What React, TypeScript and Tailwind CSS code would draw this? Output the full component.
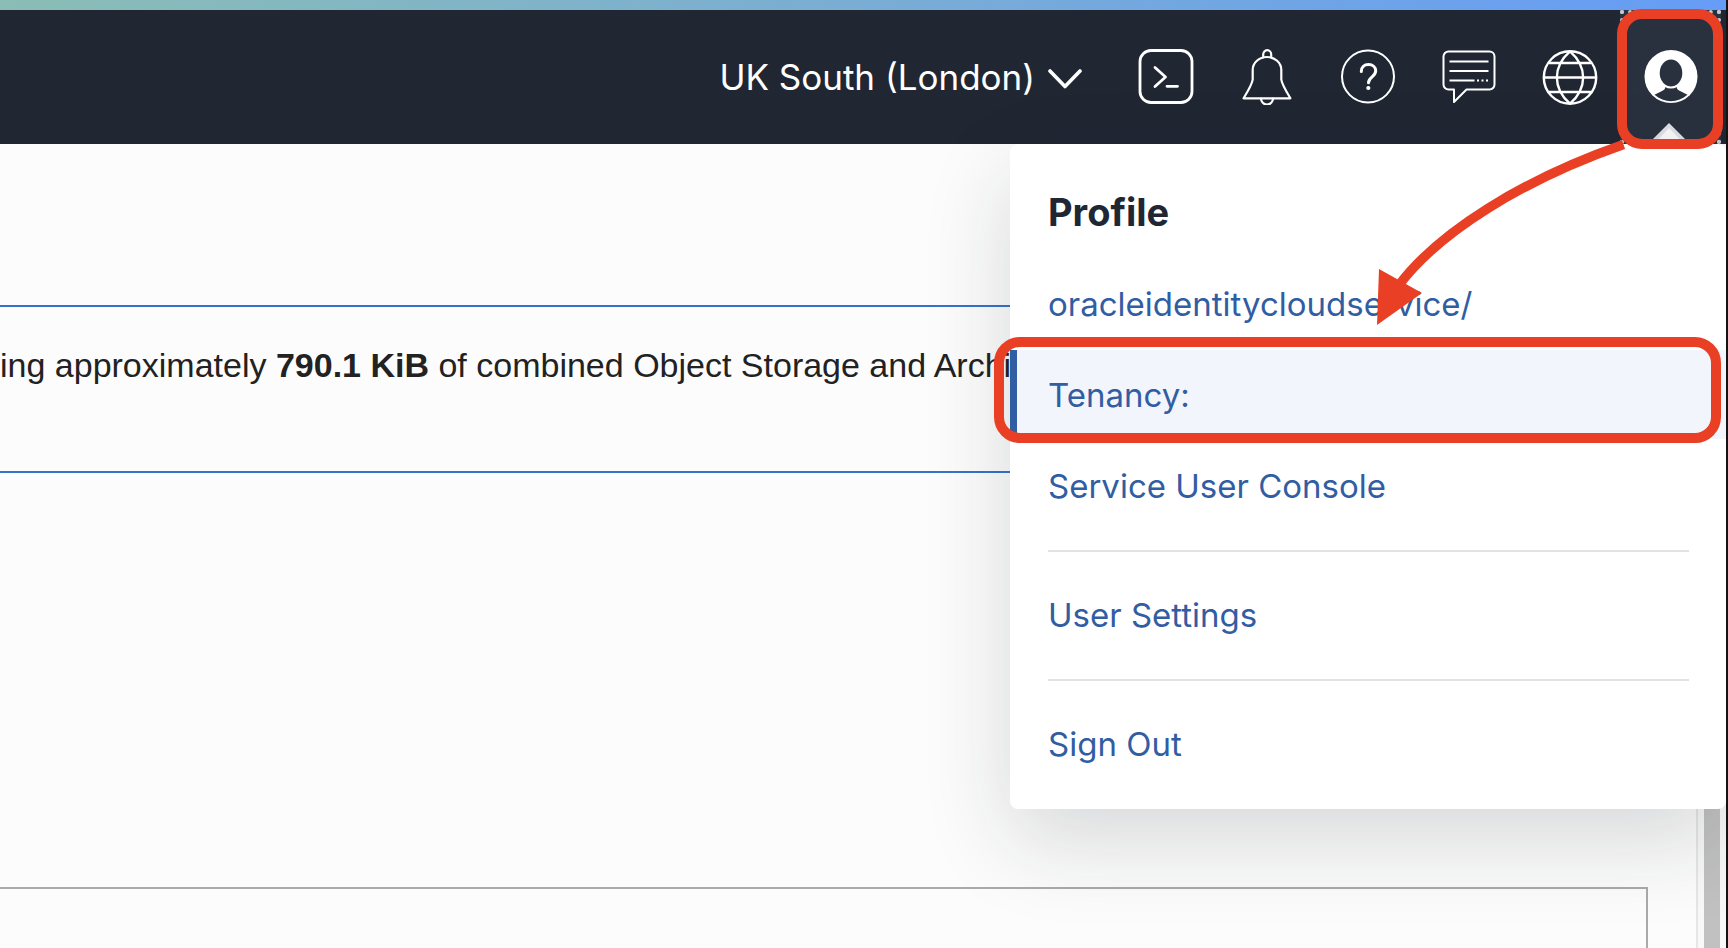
import type { ReactNode } from "react";

const iconBox = "h-[56px] w-[56px] shrink-0";

function TerminalIcon() {
  return (
    <svg className={iconBox} viewBox="0 0 56 56" fill="none" stroke="#fff" strokeWidth="2.8" strokeLinecap="round" strokeLinejoin="round">
      <rect x="2" y="1.5" width="52" height="52" rx="11" />
      <path d="M17 18.5 27.5 28 17 37.5M29 37.3h10.5" />
    </svg>
  );
}

function BellIcon() {
  return (
    <svg className={iconBox} viewBox="0 0 56 56" fill="none" stroke="#fff" strokeWidth="2.2" strokeLinecap="round" strokeLinejoin="round">
      <path d="M4.6 49.3h46.8C47 42 42.5 33.5 42.3 30.5V21a14.3 13 0 0 0-28.6 0v9.5C13.5 33.5 9 42 4.6 49.3Z" />
      <path d="M24.2 8.3V5.5a4 4.3 0 0 1 8 0v2.8M22 49.6a6 6 0 0 0 12 0" />
    </svg>
  );
}

function HelpIcon() {
  return (
    <svg className={iconBox} viewBox="0 0 56 56" fill="none" stroke="#fff" strokeLinecap="round" strokeLinejoin="round">
      <circle cx="28" cy="27.5" r="26" strokeWidth="2" />
      <path d="M21.3 22.5c0-4.500 3-7 7.200-7s7.200 2.700 7.200 6.300c0 6-7.200 6-7.200 12" strokeWidth="3" />
      <circle cx="28.3" cy="39" r="2.1" fill="#fff" stroke="none" />
    </svg>
  );
}

function ChatIcon() {
  return (
    <svg className={iconBox} viewBox="0 0 56 56" fill="none" stroke="#fff" strokeWidth="2" strokeLinecap="butt" strokeLinejoin="round">
      <path d="M7.5 2.500h41a5 5 0 0 1 5 5V35.500a5 5 0 0 1-5 5H25.500L13 53V40.500H7.500a5 5 0 0 1-5-5V7.500a5 5 0 0 1 5-5Z" />
      <path d="M8.5 12.500h39M8.500 22h39M8.500 31.500h25M36 31.500h2M40.500 31.500h2M45 31.500h2" />
    </svg>
  );
}

function GlobeIcon() {
  return (
    <svg className={iconBox} viewBox="0 0 56 56" fill="none" stroke="#fff" strokeWidth="2.4">
      <circle cx="28" cy="28.5" r="26.2" />
      <path d="M28 2.300C10.500 17.500 10.500 39.500 28 54.700M28 2.300C45.500 17.500 45.500 39.500 28 54.700M2 28.500h52M7 14h42M7 43h42" />
    </svg>
  );
}

function UserIcon() {
  return (
    <svg className={iconBox} viewBox="0 0 56 56">
      <circle cx="28" cy="27.5" r="26.5" fill="#fff" />
      <ellipse cx="28" cy="24" rx="11.3" ry="13.5" fill="#29313f" />
      <path d="M22.5 37.500c3.500 2 7.500 2 11 0 .3 2.500 1.500 3.800 3.500 4.500l7.500 3.800c-9.500 8.500-23.500 8.500-33 0l7.500-3.800c2-.7 3.200-2 3.500-4.500Z" fill="#29313f" />
      <path d="M22 37c3.700 2.300 8.300 2.300 12 0" fill="none" stroke="#fff" strokeWidth="1.5" />
    </svg>
  );
}

function HeaderButton({ label, children }: { label: string; children: ReactNode }) {
  return (
    <button aria-label={label} className="flex w-[101px] items-start justify-center pt-[39px]">
      {children}
    </button>
  );
}

function MenuItem({ children }: { children: ReactNode }) {
  return (
    <li>
      <a href="#" className="flex h-[89px] items-center pt-[2px] pl-[38px]">{children}</a>
    </li>
  );
}

function Divider() {
  return <li role="separator" className="mt-[18px] mr-[37px] mb-[16px] ml-[38px] h-[2px] bg-[#e1e2e6]" />;
}

function ProfileMenu() {
  return (
    <section className="absolute top-full right-0 w-[716px] rounded-lg bg-white pt-[36px] pb-[21px] shadow-[0_32px_88px_rgba(22,30,40,0.16)]">
      <h2 className="pl-[38px] text-[38px] leading-[64px] font-bold text-[#202733]">Profile</h2>
      <ul className="mt-[15px] flex flex-col gap-[2px] text-[33px] text-[#315da3]">
        <MenuItem>oracleidentitycloudservice/</MenuItem>
        <li className="relative">
          <a href="#" className="flex h-[89px] items-center border-l-[7px] border-[#315da3] bg-[#f2f5fb] pt-[2px] pl-[31px]">Tenancy:</a>
          <span className="pointer-events-none absolute -top-[13px] right-[5px] -bottom-[4px] -left-[16px] rounded-[26px] border-[10px] border-[#e94025]" />
        </li>
        <MenuItem>Service User Console</MenuItem>
        <Divider />
        <MenuItem>User Settings</MenuItem>
        <Divider />
        <MenuItem>Sign Out</MenuItem>
      </ul>
      <svg className="pointer-events-none absolute -top-[14px] right-[94px] h-[200px] w-[260px]" viewBox="0 0 260 200" fill="none">
        <path d="M251.500 14.500C150 50 67 102 27 155" stroke="#e94025" strokeWidth="9.500" />
        <path d="M7 139 50 163 5 195Z" fill="#e94025" />
      </svg>
    </section>
  );
}

function Header() {
  return (
    <header className="relative z-10 flex h-[134px] justify-end bg-[#202733] pr-[5px] text-white">
      <button className="mr-[32px] flex items-center gap-[12px] text-[35px]">
        UK South (London)
        <svg className="h-[24px] w-[36px]" viewBox="0 0 36 24" fill="none" stroke="#fff" strokeWidth="3.6" strokeLinecap="round" strokeLinejoin="round">
          <path d="m3 6 15 15.500L33 6" />
        </svg>
      </button>
      <HeaderButton label="Developer tools"><TerminalIcon /></HeaderButton>
      <HeaderButton label="Announcements"><BellIcon /></HeaderButton>
      <HeaderButton label="Help"><HelpIcon /></HeaderButton>
      <HeaderButton label="Support chat"><ChatIcon /></HeaderButton>
      <HeaderButton label="Language"><GlobeIcon /></HeaderButton>
      <div className="relative flex bg-[#29313f] outline-4 -outline-offset-4 outline-dotted outline-[#c4c7cc]">
        <HeaderButton label="Profile"><UserIcon /></HeaderButton>
        <svg className="absolute bottom-0 left-[28px] h-[22px] w-[42px]" viewBox="0 0 42 22">
          <path d="M0 22 21 1 42 22Z" fill="#dedfe5" />
          <path d="M6 22 21 6 36 22Z" fill="#f8f8f9" />
        </svg>
      </div>
      <ProfileMenu />
      <span className="pointer-events-none absolute -top-px right-[3px] -bottom-[5px] w-[106px] rounded-[25px] border-[10px] border-[#e94025]" />
    </header>
  );
}

export default function App() {
  return (
    <div className="flex h-screen flex-col overflow-hidden border-r-2 border-[#131313] bg-[#fcfcfc] font-['Inter',sans-serif]">
      <div className="h-[10px] shrink-0 bg-linear-to-r from-[#8abdb5] via-[#79add4] to-[#669cf6]" />
      <Header />
      <div className="flex min-h-0 grow">
        <main className="flex min-w-0 grow flex-col pt-[161px] font-['Liberation_Sans',Arial,sans-serif]">
          <div className="mr-[48px] h-[168px] shrink-0 overflow-hidden border-y-2 border-[#3572cd] pt-[36px] text-[34px] leading-[44px] whitespace-nowrap text-[#222]">
            <p>ing approximately <b>790.1 KiB</b> of combined Object Storage and Archi</p>
          </div>
          <div className="mt-[414px] mr-[48px] grow border-t-2 border-r-2 border-[#aaa]" />
        </main>
        <div className="flex w-[30px] shrink-0 justify-end border-l-2 border-[#e6e6e6] bg-[#f8f8f8] pr-[6px]">
          <div className="w-[16px] bg-[#c1c1c1]" />
        </div>
      </div>
    </div>
  );
}
